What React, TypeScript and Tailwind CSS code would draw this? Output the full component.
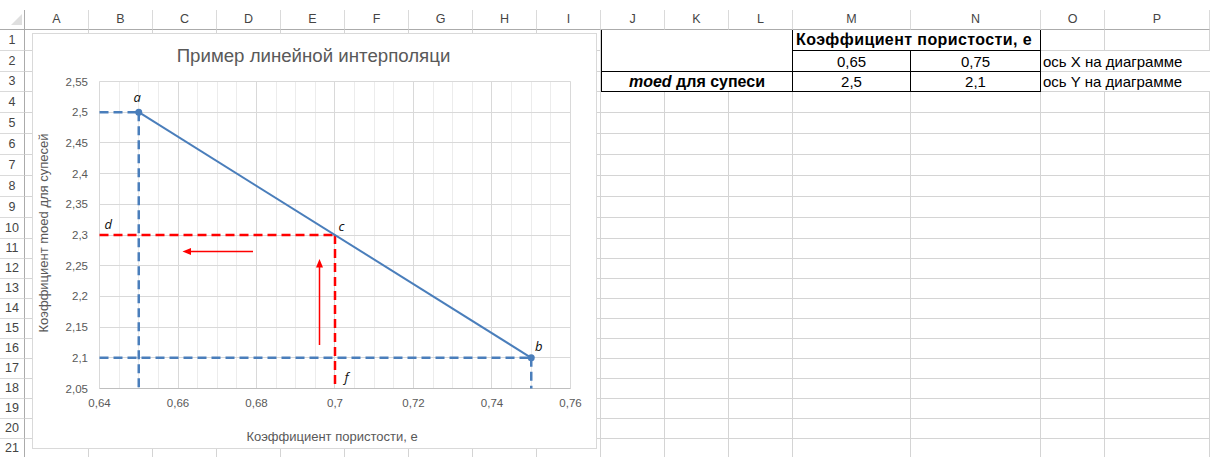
const cols = ["A", "B", "C", "D", "E", "F", "G", "H", "I", "J", "K", "L", "M", "N", "O", "P"];
const rowNums = Array.from({ length: 21 }, (_, i) => i + 1);

// chart plot area, page coordinates
const X0 = 100.5;
const X1 = 571.5;
const Y0 = 82.5;
const Y1 = 389.5;
const xp = (v: number) => X0 + ((v - 0.64) / 0.12) * (X1 - X0);
const yp = (v: number) => Y0 + ((2.55 - v) / 0.5) * (Y1 - Y0);
const snap = (p: number) => Math.round(p - 0.5) + 0.5;
const fmt = (v: number) => String(parseFloat(v.toFixed(3))).replace(".", ",");

const minorX = Array.from({ length: 25 }, (_, i) => 0.64 + i * 0.005);
const majorX = Array.from({ length: 7 }, (_, i) => 0.64 + i * 0.02);
const majorY = Array.from({ length: 11 }, (_, i) => 2.05 + i * 0.05);

const blue = "#4a7ebb";
const red = "#ff0000";

function Chart() {
  return (
    <div className="absolute left-[32px] top-[33px] h-[416px] w-[565px] border border-[#d9d9d9] bg-white">
      <svg
        width={565}
        height={416}
        viewBox="33 34 565 416"
        className="absolute -left-px -top-px font-['Liberation_Sans',Arial,sans-serif]"
      >
        <text x={314.5} y={63} textAnchor="middle" fontSize={18.67} fill="#595959">
          Пример линейной интерполяци
        </text>

        {minorX.map((v, i) => (
          <line key={"mx" + i} x1={snap(xp(v))} x2={snap(xp(v))} y1={Y0} y2={Y1} stroke="#ececec" strokeWidth={1} />
        ))}
        {majorX.map((v, i) => (
          <line key={"Mx" + i} x1={snap(xp(v))} x2={snap(xp(v))} y1={Y0} y2={Y1} stroke="#d9d9d9" strokeWidth={1} />
        ))}
        {majorY.map((v, i) => (
          <line key={"My" + i} x1={X0} x2={X1} y1={snap(yp(v))} y2={snap(yp(v))} stroke={i === 0 ? "#bfbfbf" : "#d9d9d9"} strokeWidth={1} />
        ))}

        {majorY.map((v, i) => (
          <text key={"ly" + i} x={89} y={yp(v) + 4} textAnchor="end" fontSize={11.5} fill="#595959">
            {fmt(v)}
          </text>
        ))}
        {majorX.map((v, i) => (
          <text key={"lx" + i} x={xp(v)} y={408} textAnchor="middle" fontSize={11.5} fill="#595959">
            {fmt(v)}
          </text>
        ))}

        <text transform="translate(49,234) rotate(-90)" textAnchor="middle" fontSize={13} fill="#595959">
          Коэффициент moed для супесей
        </text>
        <text x={333} y={441.5} textAnchor="middle" fontSize={13} fill="#595959">
          Коэффициент пористости, е
        </text>

        {/* blue guides */}
        <g stroke={blue} strokeWidth={2.5} strokeDasharray="9 5" fill="none">
          <line x1={X0} y1={yp(2.5)} x2={xp(0.65)} y2={yp(2.5)} />
          <line x1={xp(0.65)} y1={yp(2.5)} x2={xp(0.65)} y2={Y1} />
          <line x1={X0} y1={yp(2.1)} x2={xp(0.75)} y2={yp(2.1)} />
          <line x1={xp(0.75)} y1={yp(2.1)} x2={xp(0.75)} y2={Y1} />
        </g>
        {/* red guides */}
        <g stroke={red} strokeWidth={2.5} strokeDasharray="9 5" fill="none">
          <line x1={X0} y1={yp(2.3)} x2={xp(0.7)} y2={yp(2.3)} />
          <line x1={xp(0.7)} y1={yp(2.3)} x2={xp(0.7)} y2={Y1} />
        </g>

        <line x1={xp(0.65)} y1={yp(2.5)} x2={xp(0.75)} y2={yp(2.1)} stroke={blue} strokeWidth={2} />
        <circle cx={xp(0.65)} cy={yp(2.5)} r={3.5} fill={blue} />
        <circle cx={xp(0.75)} cy={yp(2.1)} r={3.5} fill={blue} />

        {/* arrows */}
        <line x1={254} y1={252.5} x2={190} y2={252.5} stroke={red} strokeWidth={1.5} />
        <polygon points="183.5,252.5 192,249 192,256" fill={red} />
        <line x1={320.5} y1={346} x2={320.5} y2={267} stroke={red} strokeWidth={1.5} />
        <polygon points="320.5,260 317,268.5 324,268.5" fill={red} />

        <g fontSize={13} fontStyle="italic" fill="#0d0d0d" className="font-['Open_Sans',sans-serif]">
          <text x={134.5} y={103}>a</text>
          <text x={536} y={352}>b</text>
          <text x={339.5} y={232}>c</text>
          <text x={105.5} y={230}>d</text>
          <text x={345.5} y={383}>f</text>
        </g>
      </svg>
    </div>
  );
}

const grid = "border-r border-b border-[#d4d4d4]";
const cellText = "flex items-center whitespace-nowrap text-[15px] leading-none text-black";

function RowCells({ r }: { r: number }) {
  if (r === 1) {
    return (
      <>
        {cols.slice(0, 9).map((c) => (
          <div key={c} className={grid} />
        ))}
        <div className="col-span-3 row-span-2 border-x border-b border-black" />
        <div className={`col-span-2 border-r border-b border-black pl-[3px] font-bold ${cellText} text-[16px] tracking-[0.4px]`}>
          Коэффициент пористости, е
        </div>
        <div className={grid} />
        <div className={grid} />
      </>
    );
  }
  if (r === 2 || r === 3) {
    const vals = r === 2 ? ["0,65", "0,75"] : ["2,5", "2,1"];
    return (
      <>
        {cols.slice(0, 9).map((c) => (
          <div key={c} className={grid} />
        ))}
        {r === 3 && (
          <div className={`col-span-3 justify-center border-x border-b border-black font-bold ${cellText} text-[16px]`}>
            <span className="italic">moed</span>&nbsp;для супеси
          </div>
        )}
        <div className={`justify-center border-r border-b border-black ${cellText}`}>{vals[0]}</div>
        <div className={`justify-center border-r border-b border-black ${cellText}`}>{vals[1]}</div>
        <div className={`border-b border-[#d4d4d4] pl-[2px] ${cellText}`}>
          {r === 2 ? "ось X на диаграмме" : "ось Y на диаграмме"}
        </div>
        <div className="border-b border-[#d4d4d4]" />
      </>
    );
  }
  return (
    <>
      {cols.map((c) => (
        <div key={c} className={grid} />
      ))}
    </>
  );
}

export default function App() {
  return (
    <div className="relative h-[457px] w-[1210px] overflow-hidden bg-white pt-[10px] font-['Liberation_Sans',Arial,sans-serif]">
      <div className="grid grid-cols-[25px_repeat(12,64px)_118px_130px_64px_1fr] grid-rows-[20px_21px_21px_20px_repeat(7,21px)_repeat(11,20px)]">
        <div className="relative border-r border-b border-[#ababab]">
          <svg width={24} height={19} className="absolute left-0 top-0">
            <polygon points="11,15 22,4 22,15" fill="#dfdfdf" />
          </svg>
        </div>
        {cols.map((c) => (
          <div
            key={c}
            className="flex items-center justify-center border-r border-b border-r-[#dadada] border-b-[#ababab] text-[12.5px] text-[#444]"
          >
            {c}
          </div>
        ))}
        {rowNums.map((r) => (
          <RowRow key={r} r={r} />
        ))}
      </div>
      <Chart />
    </div>
  );
}

function RowRow({ r }: { r: number }) {
  return (
    <>
      <div className="flex items-center justify-center border-r border-b border-r-[#ababab] border-b-[#dadada] text-[12.5px] text-[#444]">
        {r}
      </div>
      <RowCells r={r} />
    </>
  );
}
